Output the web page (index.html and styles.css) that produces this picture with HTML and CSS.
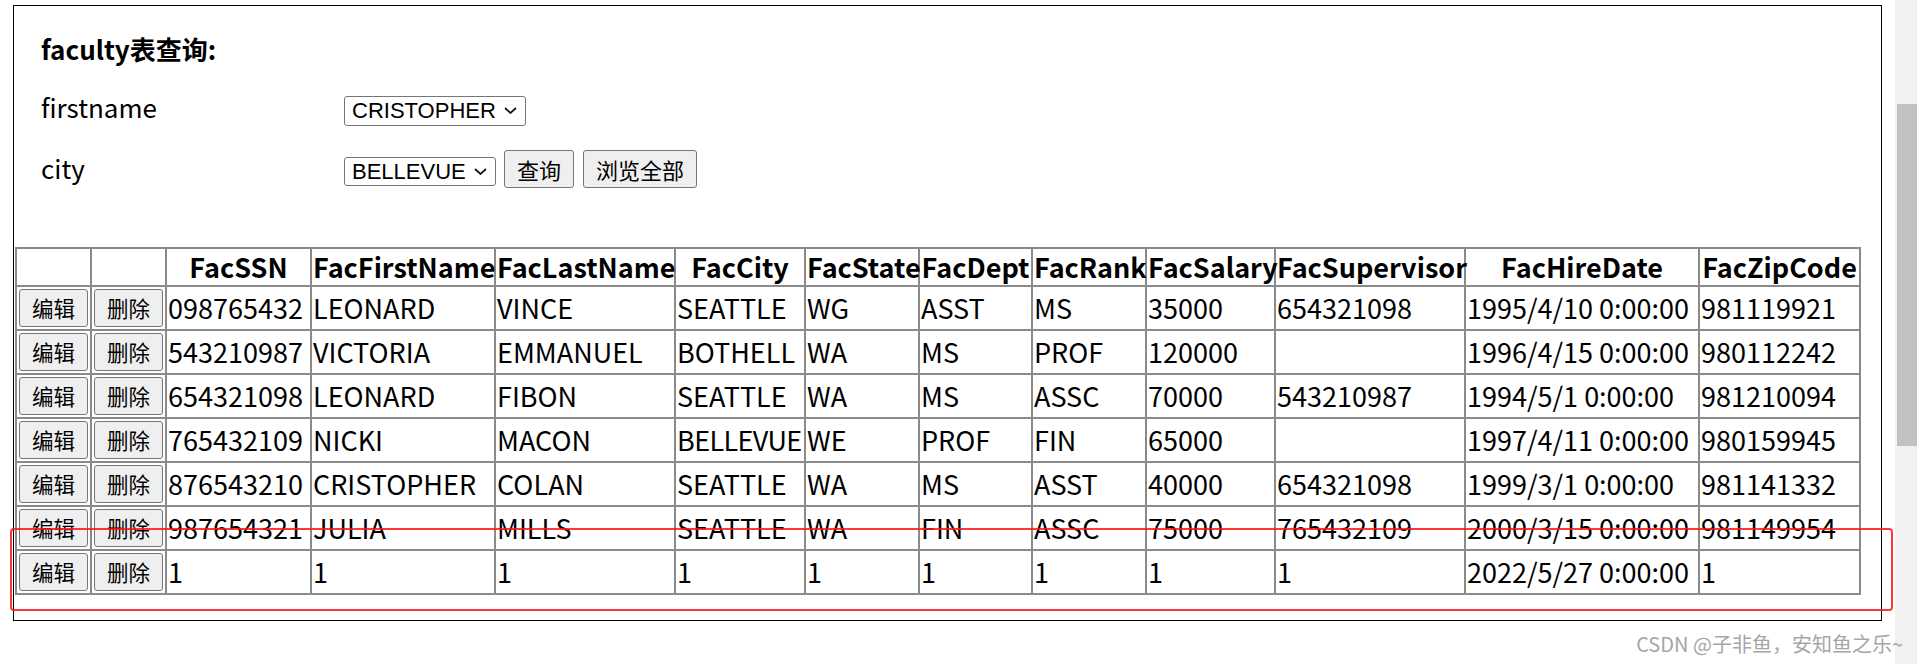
FILE: index.html
```html
<!DOCTYPE html>
<html lang="zh-CN">
<head>
<meta charset="utf-8">
<title>faculty表查询</title>
<link rel="stylesheet" href="styles.css">
</head>
<body>
<div class="page">
  <div class="frame">
    <h3 class="title">faculty表查询:</h3>
    <div class="field">
      <label class="label">firstname</label>
      <span class="select-wrap">
        <select class="select select-first"><option>CRISTOPHER</option></select>
        <svg class="chevron" viewBox="0 0 13 7"><path d="M1 1 L6.5 6 L12 1" fill="none" stroke="#111" stroke-width="1.7"/></svg>
      </span>
    </div>
    <div class="field field-city">
      <label class="label">city</label>
      <span class="select-wrap">
        <select class="select select-city"><option>BELLEVUE</option></select>
        <svg class="chevron" viewBox="0 0 13 7"><path d="M1 1 L6.5 6 L12 1" fill="none" stroke="#111" stroke-width="1.7"/></svg>
      </span>
      <button class="btn btn-query">查询</button>
      <button class="btn btn-all">浏览全部</button>
    </div>
    <table class="grid">
      <colgroup>
        <col class="c-btn1"><col class="c-btn2"><col class="c-ssn"><col class="c-first"><col class="c-last"><col class="c-city"><col class="c-state"><col class="c-dept"><col class="c-rank"><col class="c-salary"><col class="c-super"><col class="c-hire"><col class="c-zip">
      </colgroup>
      <thead>
        <tr><th></th><th></th><th>FacSSN</th><th>FacFirstName</th><th>FacLastName</th><th>FacCity</th><th>FacState</th><th>FacDept</th><th>FacRank</th><th>FacSalary</th><th>FacSupervisor</th><th>FacHireDate</th><th>FacZipCode</th></tr>
      </thead>
      <tbody>
        <tr><td><button class="btn btn-row">编辑</button></td><td><button class="btn btn-row">删除</button></td><td>098765432</td><td>LEONARD</td><td>VINCE</td><td>SEATTLE</td><td>WG</td><td>ASST</td><td>MS</td><td>35000</td><td>654321098</td><td>1995/4/10 0:00:00</td><td>981119921</td></tr>
        <tr><td><button class="btn btn-row">编辑</button></td><td><button class="btn btn-row">删除</button></td><td>543210987</td><td>VICTORIA</td><td>EMMANUEL</td><td>BOTHELL</td><td>WA</td><td>MS</td><td>PROF</td><td>120000</td><td></td><td>1996/4/15 0:00:00</td><td>980112242</td></tr>
        <tr><td><button class="btn btn-row">编辑</button></td><td><button class="btn btn-row">删除</button></td><td>654321098</td><td>LEONARD</td><td>FIBON</td><td>SEATTLE</td><td>WA</td><td>MS</td><td>ASSC</td><td>70000</td><td>543210987</td><td>1994/5/1 0:00:00</td><td>981210094</td></tr>
        <tr><td><button class="btn btn-row">编辑</button></td><td><button class="btn btn-row">删除</button></td><td>765432109</td><td>NICKI</td><td>MACON</td><td><span class="tight">BELLEVUE</span></td><td>WE</td><td>PROF</td><td>FIN</td><td>65000</td><td></td><td>1997/4/11 0:00:00</td><td>980159945</td></tr>
        <tr><td><button class="btn btn-row">编辑</button></td><td><button class="btn btn-row">删除</button></td><td>876543210</td><td>CRISTOPHER</td><td>COLAN</td><td>SEATTLE</td><td>WA</td><td>MS</td><td>ASST</td><td>40000</td><td>654321098</td><td>1999/3/1 0:00:00</td><td>981141332</td></tr>
        <tr><td><button class="btn btn-row">编辑</button></td><td><button class="btn btn-row">删除</button></td><td>987654321</td><td>JULIA</td><td>MILLS</td><td>SEATTLE</td><td>WA</td><td>FIN</td><td>ASSC</td><td>75000</td><td>765432109</td><td>2000/3/15 0:00:00</td><td>981149954</td></tr>
        <tr><td><button class="btn btn-row">编辑</button></td><td><button class="btn btn-row">删除</button></td><td>1</td><td>1</td><td>1</td><td>1</td><td>1</td><td>1</td><td>1</td><td>1</td><td>1</td><td>2022/5/27 0:00:00</td><td>1</td></tr>
      </tbody>
    </table>
  </div>
</div>
<div class="scrollbar"><div class="thumb"></div></div>
<div class="annotation"></div>
<div class="watermark">CSDN @子非鱼，安知鱼之乐~</div>
</body>
</html>
```

FILE: styles.css
```css
html, body {
  margin: 0;
  padding: 0;
  width: 1917px;
  height: 664px;
  overflow: hidden;
  background: #fff;
}
body {
  position: relative;
  display: flex;
  font-family: "Noto Sans CJK SC", "Noto Sans", sans-serif;
  color: #000;
}
.page {
  width: 1895px;
  flex: none;
}
.frame {
  margin: 5px 0 0 13px;
  width: 1869px;
  height: 616px;
  box-sizing: border-box;
  border: 1px solid #000;
}
.title {
  margin: 28px 0 0 27px;
  font-size: 26px;
  line-height: 30px;
  font-weight: 700;
}
.field {
  display: flex;
  align-items: baseline;
  margin: 28px 0 0 27px;
}
.field-city {
  margin-top: 24px;
}
.label {
  flex: none;
  width: 303px;
  font-size: 26px;
  line-height: 30px;
}
.select-wrap {
  position: relative;
  display: inline-block;
}
.select {
  appearance: none;
  -webkit-appearance: none;
  display: block;
  margin: 0;
  height: 30px;
  box-sizing: border-box;
  padding: 0 0 0 7px;
  border: 1px solid #767676;
  border-radius: 3px;
  background: #fff;
  color: #000;
  font-family: "Liberation Sans", Arial, sans-serif;
  font-size: 22px;
}
.select-first { width: 182px; }
.select-city { width: 152px; height: 29px; }
.chevron {
  position: absolute;
  right: 9px;
  top: 50%;
  width: 13px;
  height: 7px;
  margin-top: -3.5px;
  pointer-events: none;
}
.btn {
  margin: 0;
  height: 38px;
  box-sizing: border-box;
  padding: 0 12px;
  border: 1px solid #767676;
  border-radius: 3px;
  background: #efefef;
  color: #000;
  font-family: "Noto Sans CJK SC", sans-serif;
  font-size: 22px;
  line-height: 1;
}
.btn-query { margin-left: 8px; }
.btn-all { margin-left: 9px; }
.grid {
  margin: 59px 0 0 1px;
  width: 1845px;
  table-layout: fixed;
  border-collapse: collapse;
  border: 2px solid #8a8a8a;
  font-size: 27px;
}
.grid th, .grid td {
  border: 2px solid #8a8a8a;
  padding: 2px 1px;
  white-space: nowrap;
  overflow: visible;
}
.grid th {
  font-weight: 700;
  line-height: 32px;
  text-align: center;
}
.grid td {
  line-height: 38px;
  text-align: left;
  vertical-align: middle;
}
.tight {
  letter-spacing: -0.6px;
}
.btn-row {
  display: block;
  margin-left: 1px;
  font-size: 21.5px;
}
.c-btn1 { width: 75px; }
.c-btn2 { width: 75px; }
.c-ssn { width: 145px; }
.c-first { width: 184px; }
.c-last { width: 180px; }
.c-city { width: 130px; }
.c-state { width: 114px; }
.c-dept { width: 113px; }
.c-rank { width: 114px; }
.c-salary { width: 129px; }
.c-super { width: 190px; }
.c-hire { width: 234px; }
.c-zip { width: 161px; }
.scrollbar {
  width: 22px;
  height: 664px;
  flex: none;
  background: #f1f1f1;
}
.thumb {
  margin: 104px 0 0 2px;
  width: 20px;
  height: 342px;
  background: #c1c1c1;
}
.annotation {
  position: absolute;
  left: 10px;
  top: 528px;
  width: 1883px;
  height: 83px;
  box-sizing: border-box;
  border: 2px solid rgba(255, 20, 20, 0.85);
  border-radius: 4px;
  pointer-events: none;
}
.watermark {
  position: absolute;
  right: 14px;
  top: 631px;
  font-size: 20px;
  line-height: 26px;
  color: #a6a6a6;
  white-space: nowrap;
}
```
